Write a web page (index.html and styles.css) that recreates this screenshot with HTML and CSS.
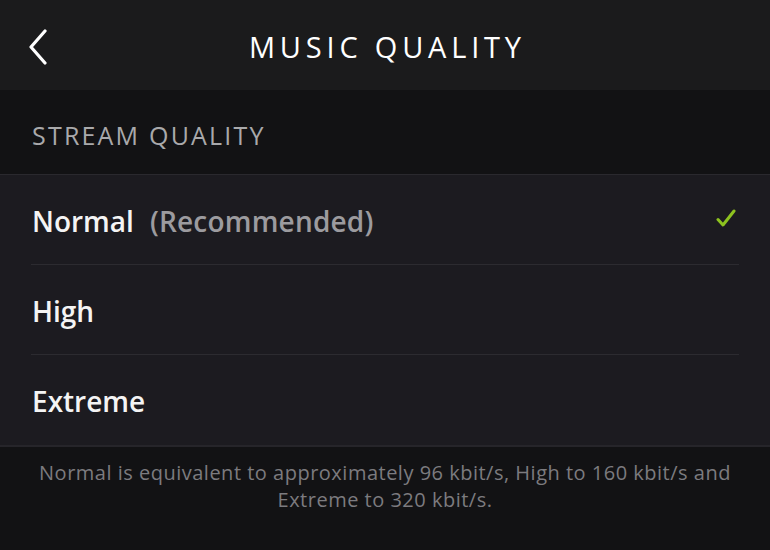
FILE: index.html
```html
<!DOCTYPE html>
<html lang="en">
<head>
<meta charset="utf-8">
<title>Music Quality</title>
<link rel="stylesheet" href="styles.css">
</head>
<body>
<div class="screen">
  <header class="topbar">
    <button class="back" aria-label="Back">
      <svg width="20" height="36" viewBox="0 0 20 36"><path d="M17 2 L3 18 L17 34" fill="none" stroke="#fff" stroke-width="3.2" stroke-linecap="round" stroke-linejoin="round"/></svg>
    </button>
    <h1 class="title">MUSIC QUALITY</h1>
  </header>
  <div class="section-head">STREAM QUALITY</div>
  <ul class="options">
    <li class="option">
      <span class="label">Normal</span><span class="note">(Recommended)</span>
      <svg class="check" width="20" height="20" viewBox="0 0 20 20"><path d="M2 11.5 L7 17 L18 3" fill="none" stroke="#8dc21f" stroke-width="3" stroke-linecap="round" stroke-linejoin="round"/></svg>
    </li>
    <li class="option"><span class="label">High</span></li>
    <li class="option"><span class="label">Extreme</span></li>
  </ul>
  <p class="footnote">Normal is equivalent to approximately 96 kbit/s, High to 160 kbit/s and Extreme to 320 kbit/s.</p>
</div>
</body>
</html>
```
FILE: styles.css
```css
* { box-sizing: border-box; }
html, body { margin: 0; padding: 0; background: #121214; }
body { font-family: "Open Sans", "Lato", sans-serif; color: #fff; }
.screen { width: 770px; height: 550px; overflow: hidden; background: #121214; }

.topbar {
  height: 90px;
  background: #1b1b1c;
  display: flex;
  align-items: center;
  justify-content: center;
  position: relative;
}
.back {
  position: absolute;
  left: 28px;
  top: 29px;
  background: none;
  border: 0;
  padding: 0;
  display: flex;
}
.title {
  margin: 0;
  font-size: 29px;
  font-weight: 400;
  letter-spacing: 4.8px;
  padding-left: 4.8px;
  color: #fff;
  padding-top: 2px;
}

.section-head {
  height: 85px;
  display: flex;
  align-items: center;
  padding-left: 32px;
  padding-top: 5px;
  font-size: 25px;
  letter-spacing: 2.2px;
  color: #a9a9ab;
  background: #121214;
  border-bottom: 1px solid #2a292e;
}

.options {
  list-style: none;
  margin: 0;
  padding: 0 31px;
  background: #1c1b20;
  border-bottom: 2px solid #26252a;
}
.option {
  height: 90px;
  display: flex;
  align-items: center;
  border-bottom: 1px solid #2c2b30;
  font-size: 28px;
  padding-left: 1px;
  padding-top: 2px;
}
.option:last-child { border-bottom: 0; }
.label { font-weight: 600; color: #f4f4f4; }
.note { margin-left: 16px; font-weight: 600; color: #9c9b9f; letter-spacing: 0.2px; }
.check { margin-left: auto; margin-right: 3px; margin-top: -5px; }

.footnote {
  margin: 0;
  padding: 12px 20px 0;
  text-align: center;
  font-size: 20px;
  line-height: 27px;
  letter-spacing: 0.5px;
  color: #7c7b7f;
}
```
